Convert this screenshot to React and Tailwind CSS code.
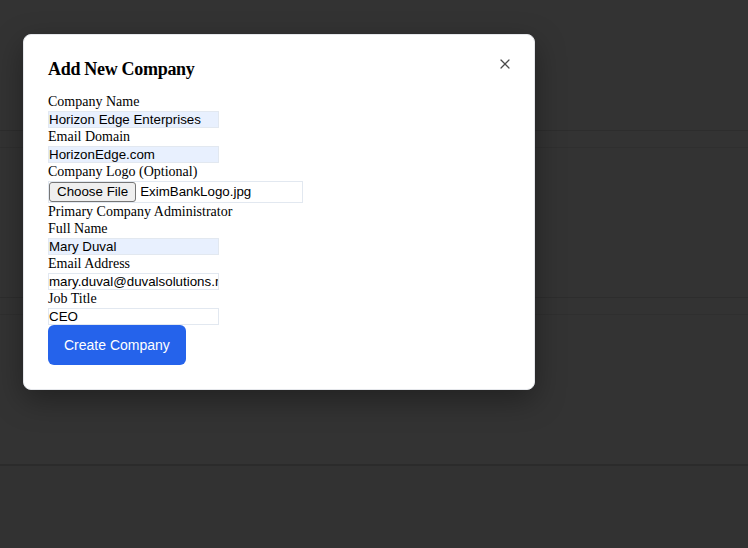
import React from "react";
import { X } from "lucide-react";

const serif = "font-['Liberation_Serif','Times_New_Roman',serif]";
const sans = "font-['Liberation_Sans',Arial,sans-serif]";

function Label({ children }) {
  return <label className={`block ${serif} text-[14px] leading-[17.7px] text-black`}>{children}</label>;
}

function Field({ value, autofill }) {
  return (
    <input
      readOnly
      value={value}
      className={`block w-[171px] h-[17.3px] border border-[#e2e8f0] ${sans} text-[13.33px] leading-[15.3px] text-black outline-none ${autofill ? "bg-[#e8f0fe]" : "bg-white"}`}
    />
  );
}

export default function App() {
  return (
    <div className="relative w-[748px] h-[548px] overflow-hidden bg-[#333333]">
      <div className="flex flex-col">
        <div className="h-[131px] border-b border-[#2d2d2d]" />
        <div className="h-[17px] border-b border-[#2f2f2f]" />
        <div className="h-[150px] border-b border-[#2d2d2d]" />
        <div className="h-[17px] border-b border-[#2f2f2f]" />
        <div className="h-[151px] border-b-2 border-[#2b2b2b]" />
        <div className="h-[84px] bg-[#323232]" />
      </div>

      <div className="absolute left-[23px] top-[34px] w-[512px] rounded-lg border border-[#e5e7eb] bg-white p-6 shadow-[0_10px_30px_rgba(0,0,0,0.35)]">
        <button className="absolute top-[21px] right-[21px] flex h-4 w-4 items-center justify-center text-[#4b4b4b]">
          <X size={16} strokeWidth={1.8} />
        </button>
        <h2 className={`${serif} text-[18px] leading-[20px] font-bold tracking-[-0.3px] text-black mb-[14px]`}>Add New Company</h2>
        <form className="flex flex-col items-start">
          <Label>Company Name</Label>
          <Field value="Horizon Edge Enterprises" autofill />
          <Label>Email Domain</Label>
          <Field value="HorizonEdge.com" autofill />
          <Label>Company Logo (Optional)</Label>
          <div className="flex h-[22px] w-[255px] items-center border border-[#e2e8f0] bg-white">
            <span className={`flex h-[20px] items-center rounded-[3px] border border-[#767676] bg-[#efefef] px-[7px] ${sans} text-[13.33px] text-black`}>
              Choose File
            </span>
            <span className={`ml-[4px] ${sans} text-[13.33px] text-black`}>EximBankLogo.jpg</span>
          </div>
          <Label>Primary Company Administrator</Label>
          <Label>Full Name</Label>
          <Field value="Mary Duval" autofill />
          <Label>Email Address</Label>
          <Field value="mary.duval@duvalsolutions.net" />
          <Label>Job Title</Label>
          <Field value="CEO" />
          <button
            type="button"
            className={`h-10 rounded-md bg-[#2563eb] px-4 ${sans} text-[14px] text-white`}
          >
            Create Company
          </button>
        </form>
      </div>
    </div>
  );
}
